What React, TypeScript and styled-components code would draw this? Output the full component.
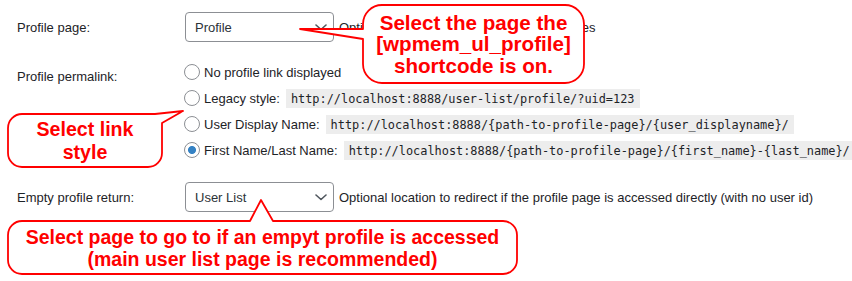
import styled, { createGlobalStyle } from 'styled-components';

const GlobalStyle = createGlobalStyle`
  html, body {
    margin: 0;
    padding: 0;
    background: #fff;
  }
  body {
    font-family: "Liberation Sans", Arial, sans-serif;
    font-size: 13px;
    color: #1d2327;
  }
`;

const Chevron = () => (
  <svg width="12" height="7" viewBox="0 0 12 7" fill="none">
    <path d="M1 1 L6 5.5 L11 1" stroke="#50575e" strokeWidth="1.6" strokeLinecap="round" strokeLinejoin="round" />
  </svg>
);

type Bubble = {
  left: number;
  top: number;
  width: number;
  height: number;
  path: string;
  lines: string[];
  lineHeight: number;
  fontSize: number;
};

const bubbles: Bubble[] = [
  {
    left: 362,
    top: 4,
    width: 223,
    height: 80,
    path: 'M20 1 H203 A19 19 0 0 1 222 20 V60 A19 19 0 0 1 203 79 H20 A19 19 0 0 1 1 60 V35 L-62 25 L1 25 V20 A19 19 0 0 1 20 1 Z',
    lines: ['Select the page the', '[wpmem_ul_profile]', 'shortcode is on.'],
    lineHeight: 21.5,
    fontSize: 20.6,
  },
  {
    left: 7,
    top: 113,
    width: 156,
    height: 55,
    path: 'M15 1 H148 L176 -2 L155 10 V40 A14 14 0 0 1 141 54 H15 A14 14 0 0 1 1 40 V15 A14 14 0 0 1 15 1 Z',
    lines: ['Select link', 'style'],
    lineHeight: 23,
    fontSize: 19.6,
  },
  {
    left: 7,
    top: 220,
    width: 511,
    height: 55,
    path: 'M15 1 H243 L254 -20 L266 1 H496 A14 14 0 0 1 510 15 V40 A14 14 0 0 1 496 54 H15 A14 14 0 0 1 1 40 V15 A14 14 0 0 1 15 1 Z',
    lines: ['Select page to go to if an empyt profile is accessed', '(main user list page is recommended)'],
    lineHeight: 22,
    fontSize: 19.5,
  },
];

const links = [
  { label: 'No profile link displayed', url: '', checked: false },
  { label: 'Legacy style:', url: 'http://localhost:8888/user-list/profile/?uid=123', checked: false },
  { label: 'User Display Name:', url: 'http://localhost:8888/{path-to-profile-page}/{user_displayname}/', checked: false },
  { label: 'First Name/Last Name:', url: 'http://localhost:8888/{path-to-profile-page}/{first_name}-{last_name}/', checked: true },
];

export default function App() {
  return (
    <>
      <GlobalStyle />
      <Page>
        <FormRow $top={0} $align="center">
          <Label>Profile page:</Label>
          <Field>
            <Select>
              <span>Profile</span>
              <Chevron />
            </Select>
            <Description>Optional pages where this shortcode resides</Description>
          </Field>
        </FormRow>

        <FormRow $top={17} $align="start">
          <Label $pad={10}>Profile permalink:</Label>
          <RadioList>
            {links.map((l) => (
              <RadioRow key={l.label}>
                <Radio type="radio" name="permalink" defaultChecked={l.checked} />
                <span>{l.label}</span>
                {l.url && <Code>{l.url}</Code>}
              </RadioRow>
            ))}
          </RadioList>
        </FormRow>

        <FormRow $top={19} $align="center">
          <Label>Empty profile return:</Label>
          <Field>
            <Select>
              <span>User List</span>
              <Chevron />
            </Select>
            <Description>
              Optional location to redirect if the profile page is accessed directly (with no user id)
            </Description>
          </Field>
        </FormRow>

        {bubbles.map((b, i) => (
          <Callout
            key={i}
            $left={b.left}
            $top={b.top}
            $width={b.width}
            $height={b.height}
          >
            <svg width={b.width} height={b.height} viewBox={`0 0 ${b.width} ${b.height}`}>
              <path d={b.path} fill="#fff" stroke="#ff0000" strokeWidth="1.8" strokeLinejoin="round" />
            </svg>
            <CalloutText $lineHeight={b.lineHeight} $size={b.fontSize}>
              {b.lines.map((line) => (
                <span key={line}>{line}</span>
              ))}
            </CalloutText>
          </Callout>
        ))}
      </Page>
    </>
  );
}

const Page = styled.div`
  position: relative;
  width: 852px;
  height: 281px;
  overflow: hidden;
  box-sizing: border-box;
  padding: 12px 0 0 17px;
`;

const FormRow = styled.div<{ $top: number; $align: 'center' | 'start' }>`
  display: grid;
  grid-template-columns: 168px 1fr;
  align-items: ${(p) => p.$align};
  margin-top: ${(p) => p.$top}px;
`;

const Label = styled.div<{ $pad?: number }>`
  padding-top: ${(p) => p.$pad ?? 0}px;
  line-height: 15px;
`;

const Field = styled.div`
  display: flex;
  align-items: center;
  gap: 5px;
  white-space: nowrap;
`;

const Select = styled.div`
  box-sizing: border-box;
  width: 149px;
  height: 30px;
  border: 1px solid #8c8f94;
  border-radius: 4px;
  display: flex;
  align-items: center;
  justify-content: space-between;
  padding: 0 6px 0 9px;
  font-size: 13px;
  color: #2c3338;
  background: #fff;
`;

const Description = styled.span`
  line-height: 15px;
`;

const RadioList = styled.div`
  display: flex;
  flex-direction: column;
  margin-left: -1px;
`;

const RadioRow = styled.label`
  display: flex;
  align-items: center;
  height: 26px;
  white-space: nowrap;
`;

const Radio = styled.input`
  appearance: none;
  box-sizing: border-box;
  width: 16px;
  height: 16px;
  margin: 0 4px 0 0;
  border: 1px solid #8c8f94;
  border-radius: 50%;
  background: #fff;

  &:checked {
    background: radial-gradient(circle, #3582c4 0 3.6px, #fff 4.4px);
  }
`;

const Code = styled.code`
  font-family: "DejaVu Sans Mono", "Liberation Mono", monospace;
  font-size: 11.9px;
  line-height: 14px;
  padding: 3px 5px 2px;
  margin-left: 6px;
  background: #ededed;
  color: #1d2327;
`;

const Callout = styled.div<{ $left: number; $top: number; $width: number; $height: number }>`
  position: absolute;
  left: ${(p) => p.$left}px;
  top: ${(p) => p.$top}px;
  width: ${(p) => p.$width}px;
  height: ${(p) => p.$height}px;

  svg {
    position: absolute;
    inset: 0;
    overflow: visible;
  }
`;

const CalloutText = styled.div<{ $lineHeight: number; $size: number }>`
  position: relative;
  height: 100%;
  display: flex;
  flex-direction: column;
  align-items: center;
  justify-content: center;
  font-size: ${(p) => p.$size}px;
  font-weight: bold;
  line-height: ${(p) => p.$lineHeight}px;
  color: #ff0000;
  white-space: nowrap;
`;
